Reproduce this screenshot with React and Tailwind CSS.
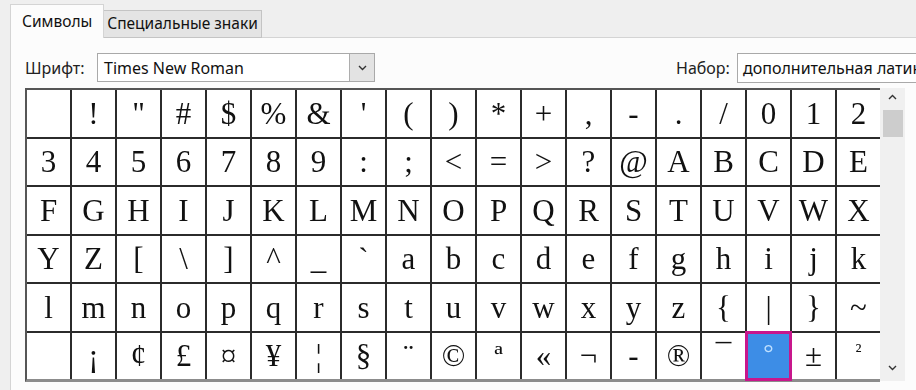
// Таблица символов: вкладки, выбор шрифта и сетка знаков
const rows = [
  [" ", "!", "\"", "#", "$", "%", "&", "'", "(", ")", "*", "+", ",", "-", ".", "/", "0", "1", "2"],
  ["3", "4", "5", "6", "7", "8", "9", ":", ";", "<", "=", ">", "?", "@", "A", "B", "C", "D", "E"],
  ["F", "G", "H", "I", "J", "K", "L", "M", "N", "O", "P", "Q", "R", "S", "T", "U", "V", "W", "X"],
  ["Y", "Z", "[", "\\", "]", "^", "_", "`", "a", "b", "c", "d", "e", "f", "g", "h", "i", "j", "k"],
  ["l", "m", "n", "o", "p", "q", "r", "s", "t", "u", "v", "w", "x", "y", "z", "{", "|", "}", "~"],
  [" ", "¡", "¢", "£", "¤", "¥", "¦", "§", "¨", "©", "ª", "«", "¬", "-", "®", "¯", "°", "±", "²"],
]

const ui = { fontFamily: '"Noto Sans", "Open Sans", sans-serif' }
const serif = { fontFamily: '"Liberation Serif", "DejaVu Serif", serif' }

function Chevron({ up, className }) {
  return (
    <svg width="9" height="6" viewBox="0 0 9 6" className={className}>
      <path d={up ? "M1 5 L4.5 1.5 L8 5" : "M1 1 L4.5 4.5 L8 1"} fill="none" stroke="#333" strokeWidth="1.4" />
    </svg>
  )
}

function Cell({ ch, selected }) {
  if (selected) {
    return (
      <div className="relative bg-white">
        <div className="absolute -inset-[2px] border-[3px] border-[#c8168c] bg-[#3d8de6] flex items-start justify-center pt-[6px] text-[26px] leading-none text-[#bfe0ff]" style={serif}>
          {ch}
        </div>
      </div>
    )
  }
  return (
    <div className="bg-white flex items-center justify-center text-[31px] leading-none text-[#111]" style={serif}>
      <span className={ch === "²" ? "text-[20px] -mt-3" : ""}>{ch}</span>
    </div>
  )
}

export default function App() {
  return (
    <div className="w-[916px] h-[390px] overflow-hidden bg-[#efefef] pl-[10px] pt-[4px]" style={ui}>
      <div className="flex items-end h-[34px]">
        <div className="h-[34px] px-[11px] bg-[#fcfcfc] border border-b-0 border-[#d4d4d4] flex items-center text-[15.5px] text-[#111] relative z-10">
          Символы
        </div>
        <div className="h-[28px] px-[3px] bg-[#e4e4e4] border border-l-0 border-[#c4c4c4] flex items-center text-[15.5px] text-[#111]">
          Специальные знаки
        </div>
      </div>
      <div className="-mt-px w-[930px] h-[360px] bg-[#fcfcfc] border-l border-t border-[#d4d4d4] pl-[14px] pt-[15px]">
        <div className="flex items-center h-[29px]">
          <span className="text-[16px] text-[#222] w-[72px]">Шрифт:</span>
          <div className="w-[278px] h-[29px] border border-[#a9a9a9] bg-white flex items-center">
            <span className="flex-1 pl-[6px] text-[16px] text-[#111]">Times New Roman</span>
            <div className="w-[25px] h-full bg-[#e3e3e3] border-l border-[#adadad] flex items-center justify-center">
              <Chevron />
            </div>
          </div>
          <span className="ml-[301px] text-[16px] text-[#222] w-[61px]">Набор:</span>
          <div className="w-[200px] h-[30px] border border-[#a9a9a9] bg-white flex items-center pl-[5px] text-[16px] text-[#111] whitespace-nowrap overflow-hidden">
            дополнительная латиница-1
          </div>
        </div>
        <div className="flex mt-[6px]">
          <div className="grid grid-cols-[repeat(19,43px)] grid-rows-[repeat(6,46.5px)] gap-[2px] bg-[#2b2b2b] border-l-2 border-t-2 border-[#555] border-b-[3px] border-b-[#8c8c8c] antialiased will-change-transform">
            {rows.map((r, i) =>
              r.map((ch, j) => <Cell key={i + "-" + j} ch={ch} selected={i === 5 && j === 16} />)
            )}
          </div>
          <div className="w-[25px] h-[293px] bg-[#f0f0f0] flex flex-col items-center pt-[6px]">
            <Chevron up />
            <div className="mt-[10px] w-[20px] h-[27px] bg-[#cdcdcd]" />
            <div className="flex-1" />
            <Chevron className="mb-[10px]" />
          </div>
        </div>
      </div>
    </div>
  )
}
